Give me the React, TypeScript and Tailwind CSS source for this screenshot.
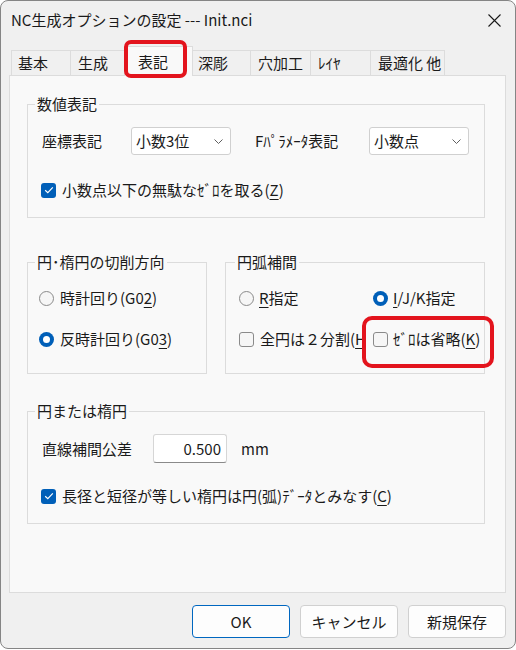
import React from "react";

function Check({ checked }: { checked?: boolean }) {
  if (checked) {
    return (
      <span className="w-[15px] h-[15px] rounded-[3px] bg-[#005fb8] flex items-center justify-center shrink-0">
        <svg width="10" height="8" viewBox="0 0 10 8">
          <path d="M1.2 4.2 L3.8 6.6 L8.8 1.4" stroke="white" strokeWidth="1.2" fill="none" />
        </svg>
      </span>
    );
  }
  return <span className="w-[15px] h-[15px] rounded-[3px] border border-[#8a8a8a] bg-[#f6f6f6] shrink-0" />;
}

function Radio({ checked }: { checked?: boolean }) {
  if (checked) {
    return (
      <span className="w-[15px] h-[15px] rounded-full bg-[#005fb8] flex items-center justify-center shrink-0">
        <span className="w-[7px] h-[7px] rounded-full bg-white" />
      </span>
    );
  }
  return <span className="w-[15px] h-[15px] rounded-full border border-[#8a8a8a] bg-[#f6f6f6] shrink-0" />;
}

function Combo({ value }: { value: string }) {
  return (
    <div className="w-[100px] h-[28px] border border-[#d0d0d0] rounded-[3px] bg-white flex items-center justify-between pl-[4px] pr-[7px] shrink-0">
      <span>{value}</span>
      <svg width="9" height="5" viewBox="0 0 9 5">
        <path d="M0.5 0.5 L4.5 4.5 L8.5 0.5" stroke="#5f5f5f" strokeWidth="1" fill="none" />
      </svg>
    </div>
  );
}

function U({ children }: { children: React.ReactNode }) {
  return <span className="underline underline-offset-[3px] decoration-[1px]">{children}</span>;
}

export default function App() {
  return (
    <div className="w-[516px] h-[650px] bg-white">
      <div className="relative w-[516px] h-[649px] rounded-[8px] border border-[#858585] bg-[#f0f0f0] overflow-hidden text-[15px] leading-[20px] text-[#1a1a1a] font-[family-name:'Noto_Sans_CJK_JP',sans-serif]">
        {/* Title bar */}
        <div className="h-[45px] flex items-start justify-between pl-[10px] pr-[14px] pt-[9px]">
          <span>NC生成オプションの設定 --- Init.nci</span>
          <span className="h-[20px] flex items-center">
            <svg width="13" height="13" viewBox="0 0 13 13">
              <path d="M0.5 0.5 L12.5 12.5 M12.5 0.5 L0.5 12.5" stroke="#1a1a1a" strokeWidth="1.1" />
            </svg>
          </span>
        </div>

        {/* Tabs */}
        <div className="h-[29px] flex items-end">
          <div className="ml-[10px] w-[60px] h-[25px] border border-b-0 border-[#dcdcdc] bg-[#f0f0f0] pl-[6px] flex items-center">基本</div>
          <div className="-ml-px w-[57px] h-[25px] border border-b-0 border-[#dcdcdc] bg-[#f0f0f0] pl-[7px] flex items-center">生成</div>
          <div className="relative z-10 -ml-[3px] -mb-px w-[69px] h-[30px] border border-b-0 border-[#dcdcdc] bg-[#f9f9f9] pl-[13px] flex items-center">表記</div>
          <div className="-ml-px w-[59px] h-[25px] border border-b-0 border-[#dcdcdc] bg-[#f0f0f0] pl-[5px] flex items-center">深彫</div>
          <div className="-ml-px w-[61px] h-[25px] border border-b-0 border-[#dcdcdc] bg-[#f0f0f0] pl-[7px] flex items-center">穴加工</div>
          <div className="-ml-px w-[61px] h-[25px] border border-b-0 border-[#dcdcdc] bg-[#f0f0f0] pl-[7px] flex items-center">ﾚｲﾔ</div>
          <div className="-ml-px w-[75px] h-[25px] border border-b-0 border-[#dcdcdc] bg-[#f0f0f0] pl-[7px] flex items-center">最適化 他</div>
        </div>

        {/* Panel */}
        <div className="ml-[8px] w-[497px] h-[518px] border border-[#dcdcdc] bg-[#f9f9f9] pl-[17px] pt-[18px]">
          {/* 数値表記 */}
          <fieldset className="w-[458px] border border-[#dcdcdc]">
            <legend className="ml-[7px] px-[2px] leading-[20px]">数値表記</legend>
            <div className="pl-[14px] pt-[13px] pb-[17px]">
              <div className="flex items-center h-[28px]">
                <span className="w-[89px] shrink-0">座標表記</span>
                <Combo value="小数3位" />
                <span className="ml-[24px] w-[114px] shrink-0">Fﾊﾟﾗﾒｰﾀ表記</span>
                <Combo value="小数点" />
              </div>
              <div className="mt-[25px] -ml-px h-[20px] flex items-center gap-[6px]">
                <Check checked />
                <span>小数点以下の無駄なｾﾞﾛを取る(<U>Z</U>)</span>
              </div>
            </div>
          </fieldset>

          <div className="mt-[34px] flex gap-[18px]">
            {/* 円・楕円の切削方向 */}
            <fieldset className="w-[180px] border border-[#dcdcdc]">
              <legend className="ml-[7px] px-[2px] leading-[20px]">円･楕円の切削方向</legend>
              <div className="pl-[11px] pt-[16px] pb-[24px]">
                <div className="h-[20px] flex items-center gap-[6px]">
                  <Radio />
                  <span>時計回り(G0<U>2</U>)</span>
                </div>
                <div className="mt-[21px] h-[20px] flex items-center gap-[6px]">
                  <Radio checked />
                  <span>反時計回り(G0<U>3</U>)</span>
                </div>
              </div>
            </fieldset>

            {/* 円弧補間 */}
            <fieldset className="w-[260px] border border-[#dcdcdc]">
              <legend className="ml-[9px] px-[2px] leading-[20px]">円弧補間</legend>
              <div className="pl-[13px] pt-[16px] pb-[24px] grid grid-cols-[134px_1fr] gap-y-[21px]">
                <div className="h-[20px] flex items-center gap-[5px]">
                  <Radio />
                  <span><U>R</U>指定</span>
                </div>
                <div className="h-[20px] flex items-center gap-[5px]">
                  <Radio checked />
                  <span><U>I</U>/J/K指定</span>
                </div>
                <div className="w-[123px] overflow-hidden whitespace-nowrap h-[20px] flex items-center gap-[6px]">
                  <Check />
                  <span>全円は２分割(<U>H</U>)</span>
                </div>
                <div className="h-[20px] flex items-center gap-[5px] whitespace-nowrap">
                  <Check />
                  <span>ｾﾞﾛは省略(<U>K</U>)</span>
                </div>
              </div>
            </fieldset>
          </div>

          {/* 円または楕円 */}
          <fieldset className="mt-[27px] w-[458px] border border-[#dcdcdc]">
            <legend className="ml-[7px] px-[2px] leading-[20px]">円または楕円</legend>
            <div className="pl-[14px] pt-[13px] pb-[17px]">
              <div className="flex items-center h-[29px]">
                <span className="w-[111px] shrink-0">直線補間公差</span>
                <div className="w-[74px] h-[29px] border border-[#d6d6d6] border-b-[#8a8a8a] rounded-[3px] bg-white flex items-center justify-end pr-[5px]">
                  0.500
                </div>
                <span className="ml-[14px]">mm</span>
              </div>
              <div className="mt-[23px] -ml-px h-[20px] flex items-center gap-[6px]">
                <Check checked />
                <span>長径と短径が等しい楕円は円(弧)ﾃﾞｰﾀとみなす(<U>C</U>)</span>
              </div>
            </div>
          </fieldset>
        </div>

        {/* Buttons */}
        <div className="mt-[12px] pr-[9px] flex justify-end gap-[10px]">
          <button className="w-[98px] h-[33px] rounded-[4px] border border-[#0067c0] bg-[#fdfdfd]">OK</button>
          <button className="w-[98px] h-[33px] rounded-[4px] border border-[#d0d0d0] bg-[#fdfdfd]">キャンセル</button>
          <button className="w-[98px] h-[33px] rounded-[4px] border border-[#d0d0d0] bg-[#fdfdfd]">新規保存</button>
        </div>

        {/* Red annotation boxes */}
        <div className="absolute left-[123px] top-[39px] w-[63px] h-[38px] border-[4px] border-[#e3141d] rounded-[7px] z-20 pointer-events-none" />
        <div className="absolute left-[361px] top-[315px] w-[132px] h-[52px] border-[4px] border-[#e3141d] rounded-[10px] z-20 pointer-events-none" />
      </div>
    </div>
  );
}
